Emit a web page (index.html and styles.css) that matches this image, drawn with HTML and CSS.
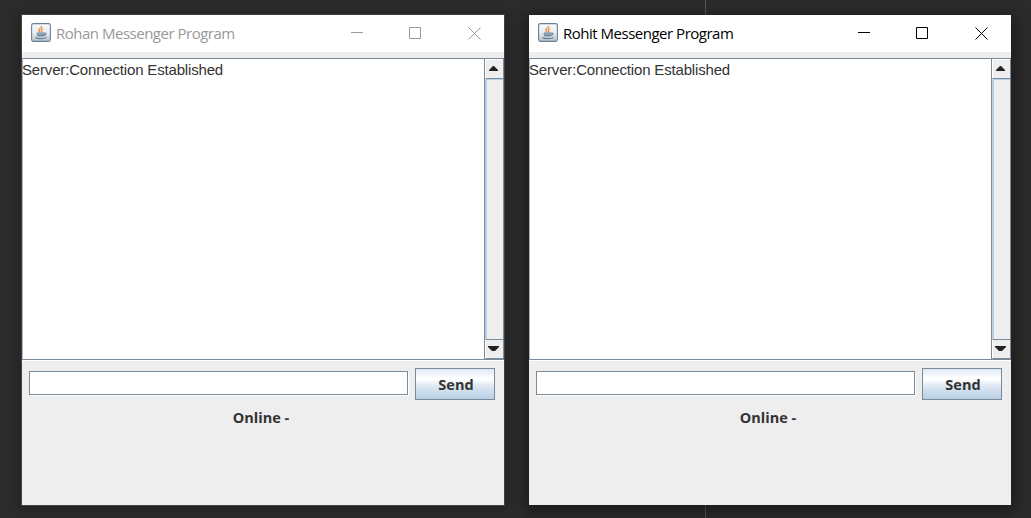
FILE: index.html
```
<!DOCTYPE html>
<html lang="en">
<head>
<meta charset="utf-8">
<title>Messenger Program</title>
<link rel="stylesheet" href="styles.css">
</head>
<body>
<svg class="defs" width="0" height="0">
  <defs>
    <linearGradient id="tile" x1="0" y1="0" x2="0" y2="1"><stop offset="0" stop-color="#f8fafb"/><stop offset=".5" stop-color="#e9eef2"/><stop offset="1" stop-color="#b4c2ce"/></linearGradient>
    <symbol id="java" viewBox="0 0 20 19">
      <rect x=".6" y=".6" width="18.8" height="17.8" rx="1.8" fill="url(#tile)" stroke="#6c8094" stroke-width="1.1"/>
      <path d="M10.7 3c.4 2-3.5 2.600-2.900 4.400.2.700 1 1.100 1.200 2M12.300 5.500c-2 .8-2.500 1.500-1.700 2.500.4.600.2 1-.2 1.500" fill="none" stroke="#e58b45" stroke-width="1.300"/>
      <path d="M5.800 9.500h7.600v1.800c0 1.400-1 2.300-2.200 2.300H8c-1.300 0-2.200-.9-2.200-2.300z" fill="#70899f"/>
      <path d="M6.500 11h6" stroke="#c6d2dc" stroke-width=".7"/>
      <path d="M13.400 10c2.300-.5 2.200 2-.7 2.400M4.500 14.500c2 1.500 9 1.500 11-.1" fill="none" stroke="#627f99" stroke-width="1.100"/>
    </symbol>
  </defs>
</svg>
<main class="desktop">
  <section class="window inactive">
    <header class="titlebar">
      <svg class="icon"><use href="#java"/></svg>
      <h1 class="title">Rohan Messenger Program</h1>
      <svg class="controls" width="131" height="13" fill="none" stroke="currentColor"><path d="M0 5.500h12M58.500.5h11v11h-11zM117.500.5l12 12M129.500.5l-12 12"/></svg>
    </header>
    <div class="log">
      <p class="message">Server:Connection Established</p>
      <div class="scrollbar">
        <div class="arrow"><svg width="9" height="5"><path d="M4 0h1l4 4v1H0V4z"/></svg></div>
        <div class="track"></div>
        <div class="arrow down"><svg width="11" height="5"><path d="M0 0h11v1L7 5H4L0 1z"/></svg></div>
      </div>
    </div>
    <form class="compose"><input class="field" type="text" aria-label="Message"><button class="send" type="button"><span>Send</span></button></form>
    <p class="status">Online -</p>
  </section>
  <section class="window">
    <header class="titlebar">
      <svg class="icon"><use href="#java"/></svg>
      <h1 class="title">Rohit Messenger Program</h1>
      <svg class="controls" width="131" height="13" fill="none" stroke="currentColor"><path d="M0 5.500h12M58.500.5h11v11h-11zM117.500.5l12 12M129.500.5l-12 12"/></svg>
    </header>
    <div class="log">
      <p class="message">Server:Connection Established</p>
      <div class="scrollbar">
        <div class="arrow"><svg width="9" height="5"><path d="M4 0h1l4 4v1H0V4z"/></svg></div>
        <div class="track"></div>
        <div class="arrow down"><svg width="11" height="5"><path d="M0 0h11v1L7 5H4L0 1z"/></svg></div>
      </div>
    </div>
    <form class="compose"><input class="field" type="text" aria-label="Message"><button class="send" type="button"><span>Send</span></button></form>
    <p class="status">Online -</p>
  </section>
</main>
</body>
</html>
```
FILE: styles.css
```
* { box-sizing: border-box; }
body { margin: 0; overflow: hidden; background: #2b2b2b; }
.defs { position: absolute; }
.desktop {
  display: flex;
  gap: 25px;
  height: 518px;
  padding: 15px 0 0 22px;
  background: linear-gradient(#555, #555) 705px 0 / 1px 100% no-repeat, #2b2b2b;
}
.window {
  display: flex;
  flex-direction: column;
  width: 482px;
  height: 490px;
  background: #eee;
  color: #333;
  box-shadow: 0 4px 14px 3px rgba(0, 0, 0, .4);
}
.inactive { box-shadow: 0 0 0 1px #434343, 0 2px 9px 2px rgba(0, 0, 0, .25); }
.titlebar {
  display: flex;
  height: 37px;
  padding: 0 22px 0 9px;
  background: #fff;
  color: #000;
}
.inactive .titlebar { color: #999; }
.icon { width: 20px; height: 19px; margin-top: 8px; }
.title {
  margin: 8px 0 0 5px;
  font: 400 15px/21px "Open Sans", sans-serif;
  letter-spacing: -.49px;
  white-space: nowrap;
}
.controls { margin: 12px 0 0 auto; }
.log {
  display: flex;
  height: 302px;
  margin-top: 6px;
  background: #fff;
  border: solid #7a8a99;
  border-width: 1px 0 1px 1px;
  border-left-color: #aab3bb;
  box-shadow: 0 1px #fff;
}
.message {
  flex: 1;
  margin: 2px 0 0 -1px;
  font: 15px/18px "Liberation Sans", Arial, sans-serif;
  letter-spacing: -.17px;
  white-space: nowrap;
}
.scrollbar {
  display: flex;
  flex-direction: column;
  width: 20px;
  border: solid #7a8a99;
  border-width: 0 1px;
}
.arrow {
  display: flex;
  justify-content: center;
  height: 20px;
  padding: 6px 2px 0 0;
  background: #eee;
  border: solid;
  border-width: 1px 0 1px 1px;
  border-color: #fff #fff #7a8a99;
  fill: #222;
}
.arrow.down { border-color: #7a8a99 #fff; }
.track { flex: 1; background: #eee; border-left: 2px solid #b8cfe5; border-top: 1px solid #b8cfe5; }
.compose { display: flex; gap: 7px; margin: 0; padding: 8px 9px 0 7px; }
.field {
  width: 379px;
  height: 24px;
  margin-top: 3px;
  padding: 0 3px;
  border: 1px solid #7a8a99;
  border-radius: 0;
  background: #fff;
  box-shadow: 1px 1px #fff;
  outline: 0;
}
.send {
  width: 80px;
  height: 32px;
  padding: 2px 0 0 2px;
  border: 1px solid #7a8a99;
  border-radius: 0;
  background: linear-gradient(#dde8f3, #fff 30%, #fff 34%, #dce7f1 58%, #b8cfe5);
  color: #333;
  font: bold 14.5px/20px "Open Sans", sans-serif;
}
.status {
  margin: 8px 4px 0 0;
  text-align: center;
  font: bold 14.5px/20px "Open Sans", sans-serif;
}
```
